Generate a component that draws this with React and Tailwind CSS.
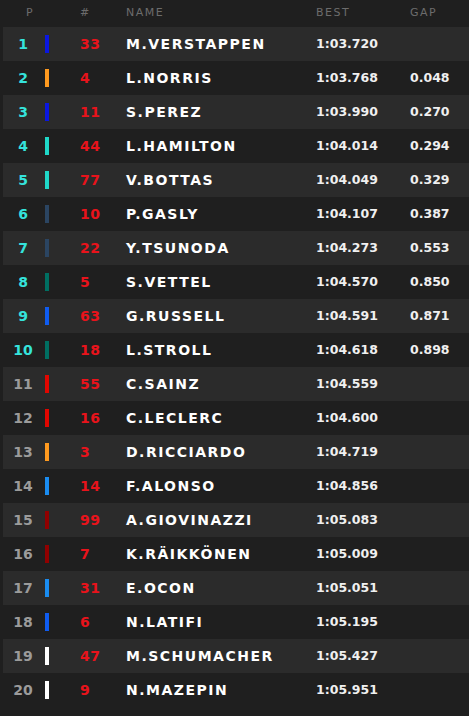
const drivers = [
  { pos: 1, num: 33, name: "M.VERSTAPPEN", best: "1:03.720", gap: "", team: "#0a17e0" },
  { pos: 2, num: 4, name: "L.NORRIS", best: "1:03.768", gap: "0.048", team: "#ff9a1f" },
  { pos: 3, num: 11, name: "S.PEREZ", best: "1:03.990", gap: "0.270", team: "#0a17e0" },
  { pos: 4, num: 44, name: "L.HAMILTON", best: "1:04.014", gap: "0.294", team: "#1fd8c8" },
  { pos: 5, num: 77, name: "V.BOTTAS", best: "1:04.049", gap: "0.329", team: "#1fd8c8" },
  { pos: 6, num: 10, name: "P.GASLY", best: "1:04.107", gap: "0.387", team: "#2b4562" },
  { pos: 7, num: 22, name: "Y.TSUNODA", best: "1:04.273", gap: "0.553", team: "#2b4562" },
  { pos: 8, num: 5, name: "S.VETTEL", best: "1:04.570", gap: "0.850", team: "#006f62" },
  { pos: 9, num: 63, name: "G.RUSSELL", best: "1:04.591", gap: "0.871", team: "#0f5cf0" },
  { pos: 10, num: 18, name: "L.STROLL", best: "1:04.618", gap: "0.898", team: "#006f62" },
  { pos: 11, num: 55, name: "C.SAINZ", best: "1:04.559", gap: "", team: "#e10600" },
  { pos: 12, num: 16, name: "C.LECLERC", best: "1:04.600", gap: "", team: "#e10600" },
  { pos: 13, num: 3, name: "D.RICCIARDO", best: "1:04.719", gap: "", team: "#ff9a1f" },
  { pos: 14, num: 14, name: "F.ALONSO", best: "1:04.856", gap: "", team: "#1a8cf0" },
  { pos: 15, num: 99, name: "A.GIOVINAZZI", best: "1:05.083", gap: "", team: "#900000" },
  { pos: 16, num: 7, name: "K.RÄIKKÖNEN", best: "1:05.009", gap: "", team: "#900000" },
  { pos: 17, num: 31, name: "E.OCON", best: "1:05.051", gap: "", team: "#1a8cf0" },
  { pos: 18, num: 6, name: "N.LATIFI", best: "1:05.195", gap: "", team: "#0f5cf0" },
  { pos: 19, num: 47, name: "M.SCHUMACHER", best: "1:05.427", gap: "", team: "#ffffff" },
  { pos: 20, num: 9, name: "N.MAZEPIN", best: "1:05.951", gap: "", team: "#ffffff" },
];

const font = { fontFamily: '"DejaVu Sans", "Liberation Sans", sans-serif' };

const DriverRow = ({ d }) => (
  <div
    className={`flex items-center h-[34px] ${
      d.pos % 2 === 1 ? "bg-[#2b2b2b]" : ""
    }`}
  >
    <span
      className={`w-[40px] text-center text-[14px] font-bold ${
        d.pos <= 10 ? "text-[#35e3dc]" : "text-[#9b9b9b]"
      }`}
    >
      {d.pos}
    </span>
    <span
      className="ml-[2px] w-[4px] h-[18px]"
      style={{ backgroundColor: d.team }}
    />
    <span className="ml-[31px] w-[46px] text-[14px] font-bold text-[#e8131b] tracking-[0.5px]">
      {d.num}
    </span>
    <span className="w-[190px] text-[14px] font-bold text-white tracking-[1.5px]">
      {d.name}
    </span>
    <span className="w-[94px] text-[12.5px] font-bold text-[#f0f0f0]">
      {d.best}
    </span>
    <span className="text-[12.5px] font-bold text-[#f0f0f0]">{d.gap}</span>
  </div>
);

export default function App() {
  return (
    <div className="w-[469px] h-[716px] bg-[#1f1f1f] pl-[3px]" style={font}>
      <div className="flex items-center h-[27px] text-[11px] text-[#6c6c6c] tracking-[1.5px]">
        <span className="w-[54px] text-center">P</span>
        <span className="ml-[23px] w-[46px]">#</span>
        <span className="w-[190px]">NAME</span>
        <span className="w-[94px]">BEST</span>
        <span>GAP</span>
      </div>
      {drivers.map((d) => (
        <DriverRow key={d.pos} d={d} />
      ))}
    </div>
  );
}
